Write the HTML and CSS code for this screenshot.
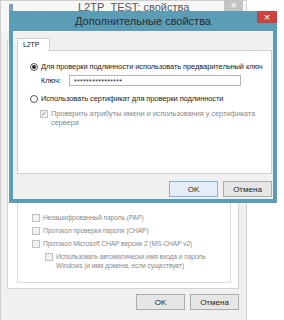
FILE: index.html
```html
<!DOCTYPE html>
<html lang="ru">
<head>
    <meta charset="UTF-8">
    <title>Дополнительные свойства</title>
    <link rel="stylesheet" href="styles.css">
</head>
<body>

<!-- Окно на заднем плане -->
<div class="window back">
    <div class="back-title">
        <span class="app-icon"></span>
        <span class="back-caption">L2TP_TEST: свойства</span>
        <span class="back-close">&#215;</span>
    </div>
    <div class="back-body">
        <div class="back-panel">
            <div class="group">
                <div class="row"><span class="box"></span>Незашифрованный пароль (PAP)</div>
                <div class="row"><span class="box"></span>Протокол проверки пароля (CHAP)</div>
                <div class="row"><span class="box"></span>Протокол Microsoft CHAP версии 2 (MS-CHAP v2)</div>
                <div class="row nested">
                    <span class="box"></span>
                    <span>Использовать автоматически имя входа и пароль<br>Windows (и имя домена, если существует)</span>
                </div>
            </div>
        </div>
        <div class="buttons back-buttons">
            <button class="btn">OK</button>
            <button class="btn">Отмена</button>
        </div>
    </div>
</div>

<!-- Диалог -->
<div class="window dialog">
    <div class="dialog-title">
        Дополнительные свойства
        <span class="close">&#215;</span>
    </div>
    <div class="dialog-body">
        <div class="tab">L2TP</div>
        <div class="panel">
            <div class="opt">
                <span class="radio checked"></span>
                Для проверки подлинности использовать предварительный ключ
            </div>
            <div class="key-row">
                <span class="key-label">Ключ:</span>
                <div class="key-input">****************</div>
            </div>
            <div class="opt opt2">
                <span class="radio"></span>
                Использовать сертификат для проверки подлинности
            </div>
            <div class="opt sub">
                <span class="box checked">&#10003;</span>
                <span>Проверить атрибуты имени и использования у сертификата<br>сервера</span>
            </div>
        </div>
        <div class="buttons">
            <button class="btn default">OK</button>
            <button class="btn">Отмена</button>
        </div>
    </div>
</div>

</body>
</html>
```

FILE: styles.css
```css
/* Общие */
* {
    margin: 0;
    padding: 0;
    box-sizing: border-box;
}

body {
    font-family: "Liberation Sans", Arial, sans-serif;
    font-size: 7.5px;
    letter-spacing: -0.1px;
    white-space: nowrap;
    color: #222;
    background-color: #fff;
    width: 284px;
    height: 320px;
    overflow: hidden;
    position: relative;
}

.window {
    position: absolute;
}

/* Окно на заднем плане */
.back {
    left: 0;
    top: 0;
    width: 247px;
    height: 322px;
    background-color: #f0f0f0;
    border: 1px solid #cfcfcf;
}

.back-title {
    height: 30px;
    position: relative;
    background-color: #f7f7f7;
}

.app-icon {
    position: absolute;
    left: 8px;
    top: 3px;
    width: 4px;
    height: 8px;
    background-color: #7d9dc8;
}

.back-caption {
    position: absolute;
    left: 77px;
    top: 0;
    font-size: 11px;
    letter-spacing: 0;
    color: #555;
}

.back-close {
    position: absolute;
    right: 3px;
    top: -1px;
    width: 19px;
    height: 11px;
    background-color: #c4c4c4;
    color: #fff;
    font-size: 10px;
    line-height: 11px;
    text-align: center;
}

.back-body {
    padding: 9px 7px 0 6px;
}

.back-panel {
    height: 249px;
    background-color: #fff;
    border: 1px solid #d4d4d4;
    padding: 0 7px 5px 9px;
    display: flex;
}

.group {
    flex: 1;
    border: 1px solid #dcdcdc;
    border-top: none;
    display: flex;
    flex-direction: column;
    justify-content: flex-end;
    padding: 0 0 12px 14px;
    color: #8a8a8a;
    font-size: 6.7px;
}

.row {
    display: flex;
    align-items: center;
    height: 13px;
    gap: 3px;
}

.row.nested {
    align-items: flex-start;
    height: auto;
    margin-left: 13px;
    margin-top: 2px;
    line-height: 9px;
}

.row.nested .box {
    margin-top: 1px;
}

.box {
    width: 8px;
    height: 8px;
    border: 1px solid #c2c2c2;
    background-color: #f2f2f2;
    flex-shrink: 0;
    font-size: 7px;
    line-height: 6px;
    text-align: center;
    color: #888;
}

.back-buttons {
    padding-top: 5px;
}

/* Кнопки */
.buttons {
    display: flex;
    justify-content: flex-end;
    gap: 5px;
}

.btn {
    width: 49px;
    height: 16px;
    font-family: "Liberation Sans", Arial, sans-serif;
    font-size: 8px;
    color: #222;
    background-color: #e6e6e6;
    border: 1px solid #acacac;
}

.btn.default {
    border-color: #7fb3df;
    background-color: #e5eef7;
}

/* Диалог */
.dialog {
    left: 9px;
    top: 11px;
    width: 268px;
    height: 192px;
    background-color: #5b9db5;
    padding: 0 4px 4px 4px;
}

.dialog-title {
    height: 20px;
    line-height: 21px;
    text-align: center;
    font-size: 11px;
    letter-spacing: 0;
    color: #2a2a2a;
    position: relative;
}

.close {
    position: absolute;
    right: -4px;
    top: 0;
    width: 20px;
    height: 12px;
    background-color: #c9433c;
    color: #fff;
    font-size: 11px;
    line-height: 12px;
}

.dialog-body {
    height: 168px;
    background-color: #f0f0f0;
    padding: 6px 1px 0 4px;
}

.tab {
    width: 33px;
    height: 13px;
    background-color: #fff;
    border: 1px solid #d0d0d0;
    border-bottom: none;
    font-size: 7px;
    line-height: 12px;
    padding-left: 5px;
    position: relative;
    top: 1px;
}

.panel {
    height: 124px;
    background-color: #fff;
    border: 1px solid #d0d0d0;
    padding: 11px 0 0 12px;
    margin-bottom: 7px;
}

.opt {
    display: flex;
    align-items: center;
    height: 9px;
    gap: 3px;
}

.radio {
    width: 8px;
    height: 8px;
    border-radius: 50%;
    border: 1px solid #555;
    background-color: #fff;
    flex-shrink: 0;
    position: relative;
}

.radio.checked::after {
    content: "";
    position: absolute;
    left: 1px;
    top: 1px;
    width: 4px;
    height: 4px;
    border-radius: 50%;
    background-color: #222;
}

.key-row {
    display: flex;
    align-items: center;
    margin-top: 4px;
    padding-left: 11px;
}

.key-label {
    width: 28px;
}

.key-input {
    width: 172px;
    height: 11px;
    border: 1px solid #b5b5b5;
    padding-left: 4px;
    font-size: 7px;
    line-height: 11px;
    letter-spacing: 0.3px;
}

.opt2 {
    margin-top: 8px;
}

.sub {
    align-items: flex-start;
    height: auto;
    margin-top: 6px;
    padding-left: 10px;
    line-height: 9px;
    color: #8a8a8a;
}

.sub .box {
    margin-top: 1px;
}
```
